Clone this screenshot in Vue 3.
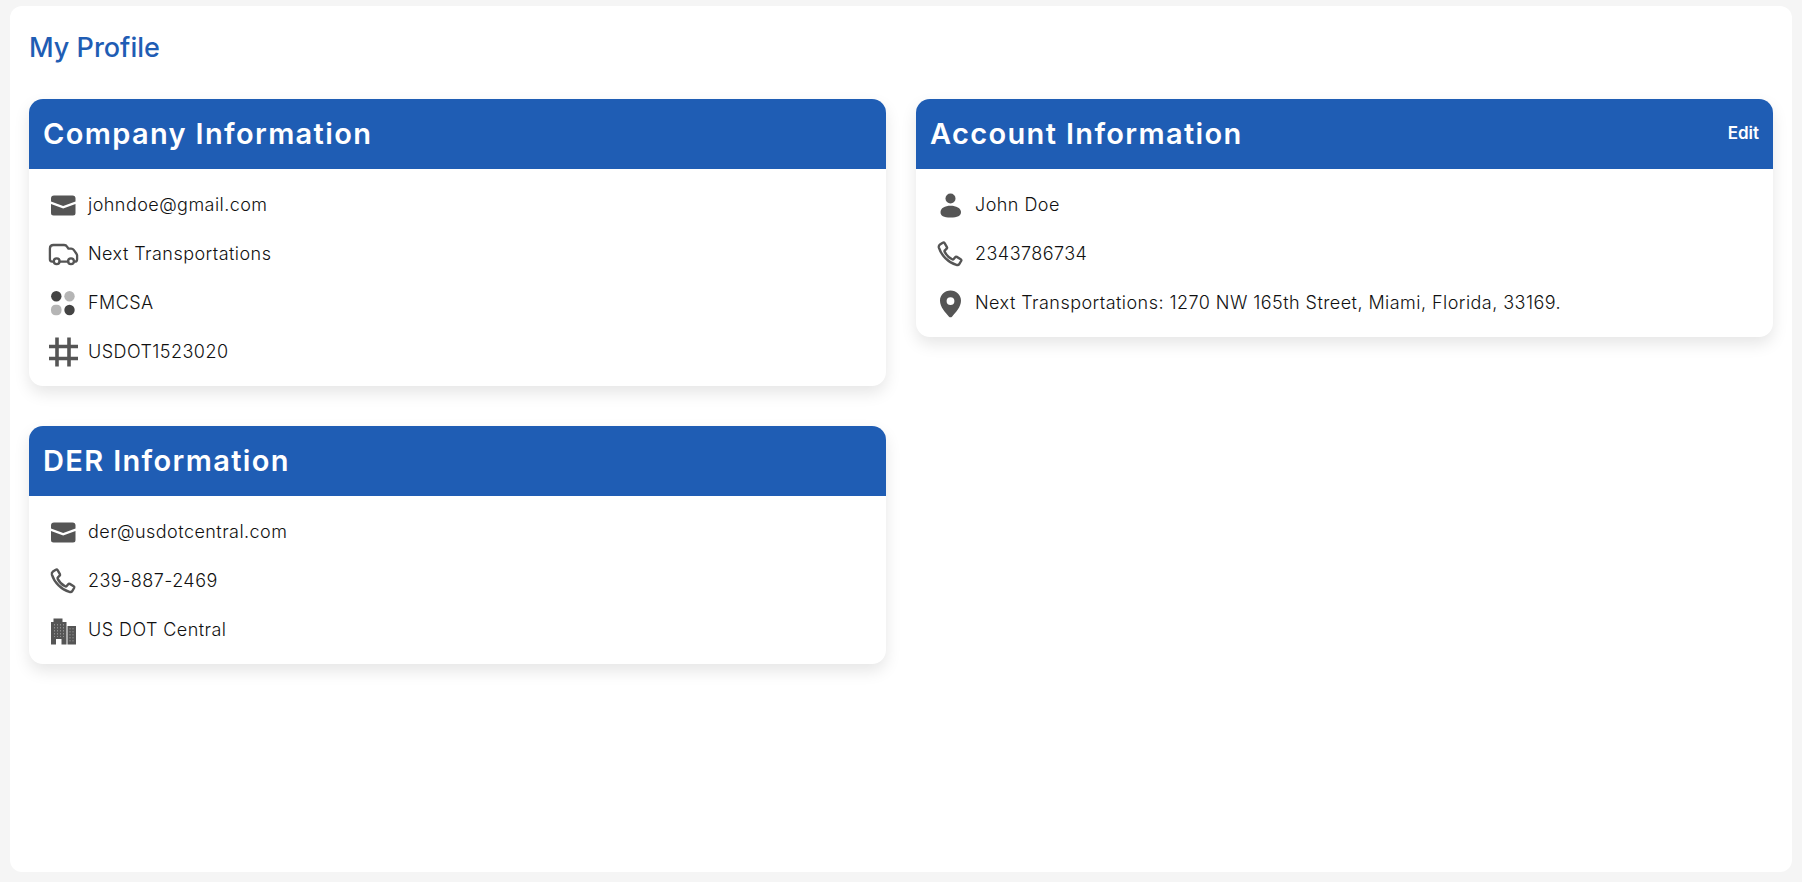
<script setup>
const company = [
  { icon: 'mail', text: 'johndoe@gmail.com' },
  { icon: 'truck', text: 'Next Transportations' },
  { icon: 'dots', text: 'FMCSA' },
  { icon: 'hash', text: 'USDOT1523020' }
]
const der = [
  { icon: 'mail', text: 'der@usdotcentral.com' },
  { icon: 'phone', text: '239-887-2469' },
  { icon: 'building', text: 'US DOT Central' }
]
const account = [
  { icon: 'user', text: 'John Doe' },
  { icon: 'phone', text: '2343786734' },
  { icon: 'pin', text: 'Next Transportations: 1270 NW 165th Street, Miami, Florida, 33169.' }
]
const columns = [
  [
    { title: 'Company Information', rows: company },
    { title: 'DER Information', rows: der }
  ],
  [{ title: 'Account Information', rows: account, edit: true }]
]
</script>

<template>
  <div class="page">
    <main class="panel">
      <h1 class="title">My Profile</h1>
      <div class="grid">
        <div v-for="(col, c) in columns" :key="c" class="col">
          <section v-for="card in col" :key="card.title" class="card">
            <header class="head">
              <h2>{{ card.title }}</h2>
              <span v-if="card.edit" class="edit">Edit</span>
            </header>
            <ul class="rows">
              <li v-for="row in card.rows" :key="row.text" class="row">
                <svg class="icon" viewBox="0 0 26 26" aria-hidden="true">
                  <template v-if="row.icon === 'mail'">
                    <path fill="#555" d="M1 6.500Q1 3.500 4 3.500h18.500q3 0 3 3v3L13.200 14 1 9.500z" />
                    <path fill="#555" d="M1 12l12.200 4.500L25.500 12v9q0 2.500-2.500 2.500H3.500Q1 23.500 1 21z" />
                  </template>
                  <template v-else-if="row.icon === 'truck'">
                    <path fill="none" stroke="#555" stroke-width="2.300" stroke-linejoin="round" stroke-linecap="round" d="M3.500 20.700H2.200C.6 20.700-.1 19.700-.1 18.200V7.500C-.1 5.300 1.300 4 3.500 4h10.500c1.500 0 2.500.7 3.200 1.800l1.200 1.900h2.800c1.100 0 1.900.4 2.500 1.200l2.600 3.600c.5.700.8 1.300.8 2.100v3.600c0 1.600-.8 2.500-2.300 2.500M9.500 20.700h8.700" />
                    <circle cx="6.700" cy="20.200" r="2.900" fill="none" stroke="#555" stroke-width="2.300" />
                    <circle cx="21" cy="20.200" r="2.900" fill="none" stroke="#555" stroke-width="2.300" />
                  </template>
                  <template v-else-if="row.icon === 'dots'">
                    <circle cx="6.300" cy="6.300" r="5.200" fill="#444" />
                    <circle cx="19.500" cy="6.300" r="5.200" fill="#b5b5b5" />
                    <rect x="1" y="14.800" width="10.500" height="10.500" rx="4.500" fill="#b5b5b5" />
                    <circle cx="19.500" cy="20" r="5.200" fill="#444" />
                  </template>
                  <template v-else-if="row.icon === 'hash'">
                    <path fill="none" stroke="#555" stroke-width="3.600" d="M7 -1.500V27.500M19 -1.500V27.500M-1 7.500H28M-1 19.500H28" />
                  </template>
                  <template v-else-if="row.icon === 'phone'">
                    <path fill="none" stroke="#555" stroke-width="2.400" stroke-linejoin="round" d="M3 3.600 5.800 1.800c.7-.4 1.400-.2 1.800.4l2.300 3.900c.3.600.2 1.200-.3 1.600L8 9.300c-.5.400-.6 1-.3 1.600 1.600 3.200 4.100 5.700 7.400 7.400.6.300 1.200.2 1.600-.3l1.500-1.800c.4-.5 1-.6 1.600-.3l3.900 2.300c.6.400.8 1.100.4 1.800l-1.700 2.800c-.6 1-1.800 1.500-3 1.100C11.500 21.600 4.300 14.500 1.900 6.600c-.3-1.100.1-2.300 1.100-3z" />
                  </template>
                  <template v-else-if="row.icon === 'building'">
                    <path fill="#555" d="M1 27.500V5h2.500V1.500h9V5h4v22.500h-5V22H6v5.500z" />
                    <path fill="#555" d="M17.500 27.500V9H26v18.500z" />
                    <path stroke="#8f8f8f" stroke-width="1" stroke-dasharray="1.500 1.500" d="M4.500 7v13M7.500 7v13M10.500 7v13M13.500 7v13M20 11v15M23 11v15" fill="none" />
                  </template>
                  <template v-else-if="row.icon === 'user'">
                    <circle cx="13.500" cy="6.500" r="5" fill="#555" />
                    <path fill="#555" d="M3.500 20c0-4 4.500-6.300 10-6.300S24 16 24 20c0 4-3.500 5.500-10.500 5.500S3.500 24 3.500 20z" />
                  </template>
                  <template v-else-if="row.icon === 'pin'">
                    <path fill="#555" fill-rule="evenodd" d="M13.500 .5c5.900 0 10.500 4.500 10.500 10.200 0 6.300-5.400 11.600-9 16-.8.900-2.200.9-3 0-3.600-4.400-9-9.700-9-16C3 5 7.600 .5 13.500 .5zm0 6.700a3.900 3.900 0 1 0 0 7.800 3.900 3.900 0 0 0 0-7.800z" />
                  </template>
                </svg>
                <span class="label">{{ row.text }}</span>
              </li>
            </ul>
          </section>
        </div>
      </div>
    </main>
  </div>
</template>

<style scoped>
.page {
  height: 882px;
  box-sizing: border-box;
  padding: 6px 10px 10px;
  background: #f5f5f5;
  font-family: "Inter", "Lato", sans-serif;
}
.panel {
  height: 100%;
  box-sizing: border-box;
  padding: 0 19px;
  background: #fff;
  border-radius: 12px;
}
.title {
  margin: 0;
  padding-top: 23px;
  height: 93px;
  box-sizing: border-box;
  font-size: 27px;
  line-height: 38px;
  font-weight: 500;
  color: #1f5db4;
}
.grid {
  display: grid;
  grid-template-columns: 857px 857px;
  gap: 30px;
  align-items: start;
}
.col {
  display: flex;
  flex-direction: column;
  gap: 40px;
}
.card {
  border-radius: 14px;
  background: #fff;
  box-shadow: 0 7px 16px rgba(0, 0, 0, 0.1);
  overflow: hidden;
}
.head {
  display: flex;
  align-items: center;
  justify-content: space-between;
  box-sizing: border-box;
  height: 70px;
  padding: 0 14px 2px;
  background: #1f5db4;
  color: #fff;
}
.head h2 {
  margin: 0;
  font-size: 29px;
  font-weight: 600;
  letter-spacing: 1.35px;
}
.edit {
  font-size: 17px;
  font-weight: 600;
}
.rows {
  list-style: none;
  margin: 0;
  padding: 11px 0 10px;
}
.row {
  display: flex;
  align-items: center;
  height: 49px;
  padding-left: 21px;
  gap: 12px;
  color: #111;
}
.icon {
  width: 26px;
  height: 26px;
  flex: none;
  overflow: visible;
}
.label {
  font-size: 18px;
  font-weight: 300;
  letter-spacing: 0.45px;
  margin-bottom: 1px;
}
</style>
<style>
html, body { background: #f5f5f5; }
</style>
